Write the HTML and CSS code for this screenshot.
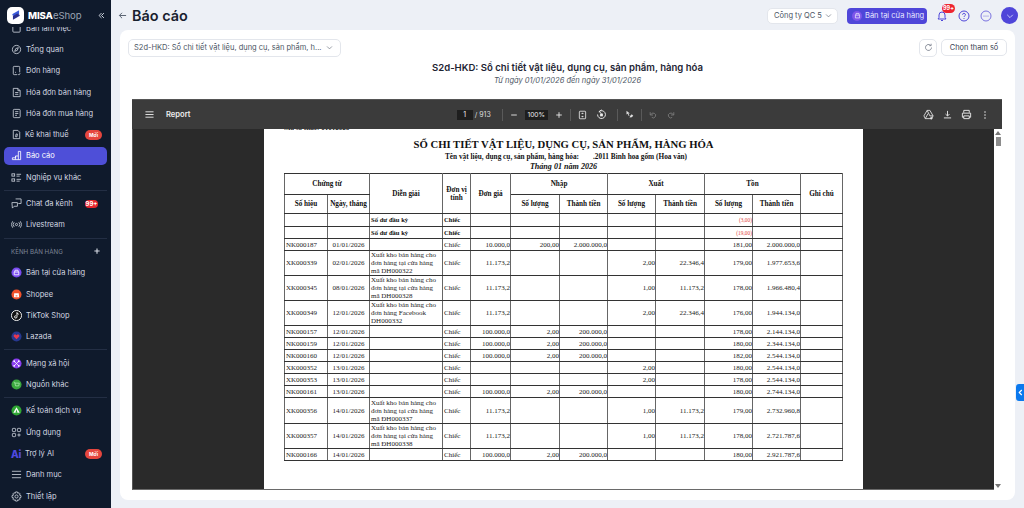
FILE: index.html
```html
<!DOCTYPE html>
<html lang="vi">
<head>
<meta charset="utf-8">
<title>Báo cáo</title>
<link rel="stylesheet" href="styles.css">
</head>
<body>
<aside class="sidebar">
  <div class="brand">
    <span class="logo"><svg viewBox="0 0 16 16" width="14" height="14"><path d="M11.5 2.5 4.5 6.5c-1 .7-1 1.6 0 2.2l2 1.1 5-3V5z" fill="#3b5bdb"/><path d="M4.5 13.5l7-4c1-.7 1-1.6 0-2.2l-2-1.1-5 3V11z" fill="#2a2f8f"/></svg></span>
    <span class="brand-name"><b>MISA</b><i>eShop</i></span>
    <svg class="collapse" viewBox="0 0 10 10" width="7" height="7"><path d="M5 1.5 1.5 5 5 8.5M8.5 1.5 5 5l3.500 3.500" fill="none" stroke="#cdd3dd" stroke-width="1.400"/></svg>
  </div>
  <nav class="nav">
    <div class="nav-inner">
      <a class="item"><svg class="ic" viewBox="0 0 12 12"><rect x="2" y="2" width="8" height="8" rx="1" class="ln"/></svg><span>Bàn làm việc</span></a>
      <a class="item"><svg class="ic" viewBox="0 0 12 12"><circle cx="6" cy="6" r="4.500" class="ln"/><path d="M4 8l1.200-3L8 4 6.800 7z" class="ln"/></svg><span>Tổng quan</span></a>
      <a class="item"><svg class="ic" viewBox="0 0 12 12"><path d="M9.500 8V2.500a1 1 0 0 0-1-1h-5a1 1 0 0 0-1 1v7a1 1 0 0 0 1 1h3" class="ln"/><path d="M7.500 10l1 1 1.500-2M4.500 8h1" class="ln"/></svg><span>Đơn hàng</span></a>
      <a class="item"><svg class="ic" viewBox="0 0 12 12"><path d="M2.500 1.500h5l2.500 2.500v6.500h-7.500z" class="ln"/><path d="M7.500 1.500V4H10M4.500 6h3.500M4.500 8h3.500" class="ln"/></svg><span>Hóa đơn bán hàng</span></a>
      <a class="item"><svg class="ic" viewBox="0 0 12 12"><rect x="2.500" y="1.500" width="7.500" height="9" rx="1" class="ln"/><path d="M4.500 4h3.500M4.500 6h3.500M4.500 8h2" class="ln"/></svg><span>Hóa đơn mua hàng</span></a>
      <a class="item tight"><svg class="ic" viewBox="0 0 12 12"><path d="M2.500 1.500h5l2 2v7h-7z" class="ln"/><path d="M5 8.500h1.500l.5-3H5.500z" class="ln"/></svg><span>Kê khai thuế</span><em class="tag">Mới</em></a>
      <a class="item active"><svg class="ic" viewBox="0 0 12 12"><path d="M1.500 10.500h9v-9h-2.500v5H5v2H1.500z" class="ln-w"/><path d="M5 6.500V10.500M8 6.500V10.500" class="ln-w"/></svg><span>Báo cáo</span></a>
      <a class="item"><svg class="ic" viewBox="0 0 12 12"><rect x="1" y="2" width="3" height="2.500" class="ln"/><rect x="1" y="7.500" width="3" height="2.500" class="ln"/><path d="M6 2.500h5M6 4.500h3.500M6 8h5M6 10h3.500" class="ln"/></svg><span>Nghiệp vụ khác</span></a>
      <div class="divider"></div>
      <a class="item"><svg class="ic" viewBox="0 0 12 12"><path d="M5 1h6v5H8" class="ln"/><path d="M1 5h6v4H3.500L1.500 11z" class="ln"/></svg><span>Chat đa kênh</span><em class="count">99+</em></a>
      <a class="item"><svg class="ic" viewBox="0 0 12 12"><circle cx="6" cy="6" r="1.200" class="ln"/><path d="M3.500 3.500a3.500 3.500 0 0 0 0 5M8.500 3.500a3.500 3.500 0 0 1 0 5M1.800 2.500a5.500 5.500 0 0 0 0 7M10.200 2.500a5.500 5.500 0 0 1 0 7" class="ln"/></svg><span>Livestream</span></a>
      <div class="divider"></div>
      <div class="section"><span>KÊNH BÁN HÀNG</span><svg viewBox="0 0 8 8" width="6" height="6"><path d="M4 .5v7M.5 4h7" stroke="#d5dae3" stroke-width="1.500"/></svg></div>
      <a class="item"><svg class="ic" viewBox="0 0 12 12"><circle cx="6" cy="6" r="5.500" fill="#7a4cf0"/><path d="M3.500 5.500h5v3h-5zM4 5.500 4.500 3.500h3L8 5.500" fill="none" stroke="#fff" stroke-width=".9"/></svg><span>Bán tại cửa hàng</span></a>
      <a class="item"><svg class="ic" viewBox="0 0 12 12"><circle cx="6" cy="6" r="5.500" fill="#f0512a"/><path d="M3.500 4.500h5l.3 4.500h-5.600z" fill="#fff"/><path d="M5 7.500h2" stroke="#f0512a"/></svg><span>Shopee</span></a>
      <a class="item"><svg class="ic" viewBox="0 0 12 12"><circle cx="6" cy="6" r="5.500" fill="#111" stroke="#fff"/><path d="M6.500 2.500v5a1.300 1.300 0 1 1-1.300-1.300M6.500 3c.3 1 1 1.500 2 1.600" fill="none" stroke="#fff" stroke-width="1"/></svg><span>TikTok Shop</span></a>
      <a class="item"><svg class="ic" viewBox="0 0 12 12"><circle cx="6" cy="6" r="5.500" fill="#27388f"/><path d="M6 9 3 6V4.300L4.500 3.500 6 4.500l1.500-1L9 4.300V6z" fill="#e8384f"/></svg><span>Lazada</span></a>
      <div class="divider"></div>
      <a class="item"><svg class="ic" viewBox="0 0 12 12"><circle cx="6" cy="6" r="5.500" fill="#8a3ff0"/><path d="M3.500 3.500l5 5M8.500 3.500l-5 5" stroke="#fff" stroke-width=".8"/><circle cx="3.500" cy="3.500" r="1" fill="#fff"/><circle cx="8.500" cy="3.500" r="1" fill="#fff"/><circle cx="3.500" cy="8.500" r="1" fill="#fff"/><circle cx="8.500" cy="8.500" r="1" fill="#fff"/></svg><span>Mạng xã hội</span></a>
      <a class="item"><svg class="ic" viewBox="0 0 12 12"><circle cx="6" cy="6" r="5.500" fill="#3ba83f"/><path d="M3 3.500h1l1 4h3.500L9 4.500H4.300" fill="none" stroke="#a8e8aa" stroke-width=".9"/></svg><span>Nguồn khác</span></a>
      <div class="divider"></div>
      <a class="item"><svg class="ic" viewBox="0 0 12 12"><circle cx="6" cy="6" r="5.500" fill="#2fa634"/><path d="M6 2.500 9.500 8.500h-7z" fill="#fff"/><path d="M6 5 4.800 8.500h2.400z" fill="#2fa634"/></svg><span>Kế toán dịch vụ</span></a>
      <a class="item"><svg class="ic" viewBox="0 0 12 12"><rect x="1.500" y="1.500" width="3.500" height="3.500" rx=".8" class="ln"/><rect x="7" y="1.500" width="3.500" height="3.500" rx=".8" class="ln"/><rect x="1.500" y="7" width="3.500" height="3.500" rx=".8" class="ln"/><path d="M8.700 7v3.500M7 8.700h3.500" class="ln"/></svg><span>Ứng dụng</span></a>
      <a class="item tight"><b class="ai">Ai</b><span>Trợ lý AI</span><em class="tag">Mới</em></a>
      <a class="item"><svg class="ic" viewBox="0 0 12 12"><path d="M1 2.500h10M1 6h10M1 9.500h10" class="ln"/></svg><span>Danh mục</span></a>
      <a class="item"><svg class="ic" viewBox="0 0 12 12"><circle cx="6" cy="6" r="1.700" class="ln"/><path d="M5 1h2l.4 1.500 1.400-.6 1.200 1.300-.8 1.300L10.900 5v2l-1.700.5.800 1.300-1.200 1.300-1.400-.6L7 11H5l-.4-1.500-1.400.6L2 8.800l.8-1.300L1.100 7V5l1.700-.5L2 3.200l1.200-1.300 1.400.6z" class="ln"/></svg><span>Thiết lập</span></a>
    </div>
  </nav>
</aside>

<main class="main">
  <header class="topbar">
    <svg class="back" viewBox="0 0 10 10" width="9" height="9"><path d="M9 5H1.500M4.500 2 1.500 5l3 3" fill="none" stroke="#5a6472" stroke-width="1.100"/></svg>
    <h1>Báo cáo</h1>
    <div class="spacer"></div>
    <button class="company">Công ty QC 5<svg viewBox="0 0 10 10" width="7" height="7"><path d="M1.500 3.500 5 7l3.500-3.500" fill="none" stroke="#6b7280" stroke-width="1"/></svg></button>
    <button class="sell"><span class="sell-ic"><svg viewBox="0 0 10 10" width="7" height="7"><path d="M2 4.500h6v4H2zM2.500 4.500 3 2h4l.5 2.500" fill="none" stroke="#fff" stroke-width=".9"/></svg></span>Bán tại cửa hàng</button>
    <span class="bell"><svg viewBox="0 0 12 12" width="12" height="12"><path d="M2 9h8L9 7.500V5a3 3 0 0 0-6 0v2.500zM5 10.500h2" fill="none" stroke="#4f46d9" stroke-width="1"/></svg><em class="bell-badge">99+</em></span>
    <svg class="round" viewBox="0 0 12 12" width="12" height="12"><circle cx="6" cy="6" r="5" fill="none" stroke="#4f46d9" stroke-width="1"/><path d="M4.600 4.700a1.400 1.400 0 1 1 2 1.300c-.4.300-.6.500-.6 1" fill="none" stroke="#4f46d9" stroke-width="1"/><circle cx="6" cy="8.500" r=".6" fill="#4f46d9"/></svg>
    <svg class="round" viewBox="0 0 12 12" width="12" height="12"><circle cx="6" cy="6" r="5" fill="none" stroke="#6d64dc" stroke-width=".9"/><circle cx="4" cy="6" r=".6" fill="#6d64dc"/><circle cx="6" cy="6" r=".6" fill="#6d64dc"/><circle cx="8" cy="6" r=".6" fill="#6d64dc"/></svg>
    <span class="avatar"><svg viewBox="0 0 10 10" width="8" height="8"><path d="M1.500 3.500 5 7l3.500-3.500" fill="none" stroke="#dfe3ff" stroke-width="1"/></svg></span>
  </header>

  <section class="card">
    <div class="filters">
      <div class="select"><span>S2d-HKD: Sổ chi tiết vật liệu, dụng cụ, sản phẩm, h...</span><svg viewBox="0 0 10 10" width="7" height="7"><path d="M1.500 3.500 5 7l3.500-3.500" fill="none" stroke="#6b7280" stroke-width="1"/></svg></div>
      <div class="spacer"></div>
      <button class="refresh"><svg viewBox="0 0 12 12" width="9" height="9"><path d="M10 6a4 4 0 1 1-1.300-3M9.500 1v2.500H7" fill="none" stroke="#6b7280" stroke-width="1"/></svg></button>
      <button class="params">Chọn tham số</button>
    </div>
    <h2 class="report-title">S2d-HKD: Sổ chi tiết vật liệu, dụng cụ, sản phẩm, hàng hóa</h2>
    <p class="report-date">Từ ngày 01/01/2026 đến ngày 31/01/2026</p>

    <div class="viewer">
      <div class="pdf-bar">
        <div class="bar-left">
          <svg viewBox="0 0 10 10" width="9" height="9"><path d="M.5 2h9M.5 5h9M.5 8h9" stroke="#eee" stroke-width="1"/></svg>
          <span class="doc-name">Report</span>
        </div>
        <div class="bar-center">
          <span class="field page-field">1</span>
          <span class="pages">/ 913</span>
          <i class="sep"></i>
          <svg viewBox="0 0 10 10" width="8" height="8"><path d="M1.500 5h7" stroke="#eee" stroke-width="1.100"/></svg>
          <span class="field zoom-field">100%</span>
          <svg viewBox="0 0 10 10" width="8" height="8"><path d="M1.500 5h7M5 1.500v7" stroke="#eee" stroke-width="1.100"/></svg>
          <i class="sep"></i>
          <svg class="after-2" viewBox="0 0 10 10" width="9" height="10"><rect x="1.500" y=".8" width="7" height="8.400" rx=".8" fill="none" stroke="#eee" stroke-width=".9"/><path d="M5 2.500v1.500M5 6v1.500M3.800 3.300h2.400M3.800 6.700h2.400" stroke="#eee" stroke-width=".7"/></svg>
          <svg class="after-3" viewBox="0 0 12 12" width="11" height="11"><path d="M3 3a4.300 4.300 0 1 1-1.300 3M6 .8 3.500 3 6 5" fill="none" stroke="#eee" stroke-width="1"/><rect x="4.500" y="5" width="3" height="3" fill="#eee"/></svg>
          <i class="sep"></i>
          <svg viewBox="0 0 12 12" width="9" height="9"><path d="M2 1v5l1.500-1L5 8l1-.5-1.500-3H6.500zM7 7.500l2-2 2 2-2 2zM6 10l1-2.500L9 9.500z" fill="#ddd"/></svg>
          <i class="sep"></i>
          <svg class="after-3" viewBox="0 0 10 10" width="8" height="8"><path d="M2.500 4.500a3 3 0 1 1 1 3.500M1.500 1.500v3.500h3.500" fill="none" stroke="#8a8a8a" stroke-width=".9"/></svg>
          <svg viewBox="0 0 10 10" width="8" height="8"><path d="M7.500 4.500a3 3 0 1 0-1 3.500M8.500 1.500v3.500H5" fill="none" stroke="#8a8a8a" stroke-width=".9"/></svg>
        </div>
        <div class="bar-right">
          <svg viewBox="0 0 12 12" width="11" height="11"><path d="M4.500 1.500h3L11 7.500 9.500 10.500h-7L1 7.500zM4.500 1.500 7.500 7.500h3.500M2.500 10.500l3-5.500" fill="none" stroke="#eee" stroke-width=".9"/><path d="M9 8.500v3M7.500 10h3" stroke="#eee"/></svg>
          <svg viewBox="0 0 10 10" width="9" height="9"><path d="M5 1v5.500M2.800 4.500 5 6.700l2.200-2.200M1 8.800h8" fill="none" stroke="#eee" stroke-width="1"/></svg>
          <svg class="after-2" viewBox="0 0 12 12" width="11" height="11"><path d="M3 4V1.500h6V4M3 9H1.500V4.500h9V9H9M3 7.500h6v3H3z" fill="none" stroke="#eee" stroke-width="1"/></svg>
          <svg viewBox="0 0 4 12" width="4" height="10"><circle cx="2" cy="2.500" r=".9" fill="#eee"/><circle cx="2" cy="6" r=".9" fill="#eee"/><circle cx="2" cy="9.500" r=".9" fill="#eee"/></svg>
        </div>
      </div>
      <div class="pdf-body">
        <div class="pdf-stage">
          <div class="page">
            <div class="clipped"><span>Mã số thuế: 01012026</span></div>
            <h3 class="pg-title">SỔ CHI TIẾT VẬT LIỆU, DỤNG CỤ, SẢN PHẨM, HÀNG HÓA</h3>
            <p class="pg-sub">Tên vật liệu, dụng cụ, sản phẩm, hàng hóa:<span class="gap"></span>.2011 Bình hoa gốm (Hoa văn)</p>
            <p class="pg-month">Tháng 01 năm 2026</p>
            <table class="ledger">
              <colgroup>
                <col class="c43"><col class="c42"><col class="c73"><col class="c28"><col class="c40"><col class="c49"><col class="c48"><col class="c48"><col class="c49"><col class="c48"><col class="c48"><col class="c42">
              </colgroup>
              <thead>
                <tr class="h1">
                  <th colspan="2">Chứng từ</th><th rowspan="2">Diễn giải</th><th rowspan="2">Đơn vị<br>tính</th><th rowspan="2">Đơn giá</th><th colspan="2">Nhập</th><th colspan="2">Xuất</th><th colspan="2">Tồn</th><th rowspan="2">Ghi chú</th>
                </tr>
                <tr class="h2">
                  <th>Số hiệu</th><th>Ngày, tháng</th><th>Số lượng</th><th>Thành tiền</th><th>Số lượng</th><th>Thành tiền</th><th>Số lượng</th><th>Thành tiền</th>
                </tr>
              </thead>
              <tbody>
                <tr class="r13"><td></td><td></td><td class="b">Số dư đầu kỳ</td><td class="b">Chiếc</td><td></td><td></td><td></td><td></td><td></td><td class="n red">(3,00)</td><td></td><td></td></tr>
                <tr class="r12"><td></td><td></td><td class="b">Số dư đầu kỳ</td><td class="b">Chiếc</td><td></td><td></td><td></td><td></td><td></td><td class="n red">(19,00)</td><td></td><td></td></tr>
                <tr class="r12"><td>NK000187</td><td class="c">01/01/2026</td><td></td><td>Chiếc</td><td class="n">10.000,0</td><td class="n">200,00</td><td class="n">2.000.000,0</td><td></td><td></td><td class="n">181,00</td><td class="n">2.000.000,0</td><td></td></tr>
                <tr class="r25"><td>XK000339</td><td class="c">02/01/2026</td><td>Xuất kho bán hàng cho đơn hàng tại cửa hàng mã DH000322</td><td>Chiếc</td><td class="n">11.173,2</td><td></td><td></td><td class="n">2,00</td><td class="n">22.346,4</td><td class="n">179,00</td><td class="n">1.977.653,6</td><td></td></tr>
                <tr class="r25"><td>XK000345</td><td class="c">08/01/2026</td><td>Xuất kho bán hàng cho đơn hàng tại cửa hàng mã DH000328</td><td>Chiếc</td><td class="n">11.173,2</td><td></td><td></td><td class="n">1,00</td><td class="n">11.173,2</td><td class="n">178,00</td><td class="n">1.966.480,4</td><td></td></tr>
                <tr class="r25"><td>XK000349</td><td class="c">12/01/2026</td><td>Xuất kho bán hàng cho đơn hàng Facebook DH000332</td><td>Chiếc</td><td class="n">11.173,2</td><td></td><td></td><td class="n">2,00</td><td class="n">22.346,4</td><td class="n">176,00</td><td class="n">1.944.134,0</td><td></td></tr>
                <tr class="r12"><td>NK000157</td><td class="c">12/01/2026</td><td></td><td>Chiếc</td><td class="n">100.000,0</td><td class="n">2,00</td><td class="n">200.000,0</td><td></td><td></td><td class="n">178,00</td><td class="n">2.144.134,0</td><td></td></tr>
                <tr class="r12"><td>NK000159</td><td class="c">12/01/2026</td><td></td><td>Chiếc</td><td class="n">100.000,0</td><td class="n">2,00</td><td class="n">200.000,0</td><td></td><td></td><td class="n">180,00</td><td class="n">2.344.134,0</td><td></td></tr>
                <tr class="r12"><td>NK000160</td><td class="c">12/01/2026</td><td></td><td>Chiếc</td><td class="n">100.000,0</td><td class="n">2,00</td><td class="n">200.000,0</td><td></td><td></td><td class="n">182,00</td><td class="n">2.544.134,0</td><td></td></tr>
                <tr class="r12"><td>XK000352</td><td class="c">13/01/2026</td><td></td><td>Chiếc</td><td></td><td></td><td></td><td class="n">2,00</td><td></td><td class="n">180,00</td><td class="n">2.544.134,0</td><td></td></tr>
                <tr class="r12"><td>XK000353</td><td class="c">13/01/2026</td><td></td><td>Chiếc</td><td></td><td></td><td></td><td class="n">2,00</td><td></td><td class="n">178,00</td><td class="n">2.544.134,0</td><td></td></tr>
                <tr class="r12"><td>NK000161</td><td class="c">13/01/2026</td><td></td><td>Chiếc</td><td class="n">100.000,0</td><td class="n">2,00</td><td class="n">200.000,0</td><td></td><td></td><td class="n">180,00</td><td class="n">2.744.134,0</td><td></td></tr>
                <tr class="r26"><td>XK000356</td><td class="c">14/01/2026</td><td>Xuất kho bán hàng cho đơn hàng tại cửa hàng mã ĐH000337</td><td>Chiếc</td><td class="n">11.173,2</td><td></td><td></td><td class="n">1,00</td><td class="n">11.173,2</td><td class="n">179,00</td><td class="n">2.732.960,8</td><td></td></tr>
                <tr class="r25"><td>XK000357</td><td class="c">14/01/2026</td><td>Xuất kho bán hàng cho đơn hàng tại cửa hàng mã ĐH000338</td><td>Chiếc</td><td class="n">11.173,2</td><td></td><td></td><td class="n">1,00</td><td class="n">11.173,2</td><td class="n">178,00</td><td class="n">2.721.787,6</td><td></td></tr>
                <tr class="r12"><td>NK000166</td><td class="c">14/01/2026</td><td></td><td>Chiếc</td><td class="n">100.000,0</td><td class="n">2,00</td><td class="n">200.000,0</td><td></td><td></td><td class="n">180,00</td><td class="n">2.921.787,6</td><td></td></tr>
              </tbody>
            </table>
          </div>
        </div>
        <div class="scrollbar">
          <i class="arrow-up"></i>
          <i class="thumb"></i>
          <div class="spacer"></div>
          <i class="arrow-down"></i>
        </div>
      </div>
    </div>
  </section>
  <button class="side-tab"><svg viewBox="0 0 6 8" width="5" height="7"><path d="M4.500 1 1.500 4l3 3" fill="none" stroke="#fff" stroke-width="1.400"/></svg></button>
</main>
</body>
</html>
```

FILE: styles.css
```css
* { box-sizing: border-box; }
html, body { margin: 0; height: 508px; overflow: hidden; }
body { display: flex; font-family: Inter, "Noto Sans", sans-serif; background: #edf0f6; color: #1d2433; }
button { font-family: inherit; cursor: pointer; }
.spacer { flex: 1; }

/* sidebar */
.sidebar { width: 111px; height: 508px; background: #0f1a2c; display: flex; flex-direction: column; flex: none; overflow: hidden; }
.brand { height: 27px; flex: none; display: flex; align-items: center; padding: 3px 6px 0 7px; }
.logo { width: 17px; height: 17px; border-radius: 5px; background: #fff; display: flex; align-items: center; justify-content: center; }
.brand-name { margin-left: 4px; font-size: 9.6px; letter-spacing: -.1px; flex: 1; }
.brand-name b { color: #fff; font-weight: 800; }
.brand-name i { color: #9aa3b2; font-style: normal; }
.nav { flex: 1; overflow: hidden; }
.nav-inner { margin-top: -9.5px; }
.item { height: 21.3px; margin: 0 4px; padding-left: 7px; display: flex; align-items: center; gap: 4px; font-size: 7.5px; color: #d3d8e1; border-radius: 5px; }
.item.tight span { margin-left: -1px; }
.item.active { height: 17.5px; margin-top: 1.9px; margin-bottom: 1.9px; background: #4e4fd8; color: #fff; }
.ic { width: 11px; height: 11px; flex: none; }
.ln { fill: none; stroke: #cdd3dd; stroke-width: .9; }
.ln-w { fill: none; stroke: #fff; stroke-width: .9; }
.tag { margin-left: auto; margin-right: 5px; width: 17px; height: 10px; border-radius: 5px; background: #e5463e; color: #fff; font-size: 5px; font-style: normal; font-weight: 700; display: flex; align-items: center; justify-content: center; }
.count { margin-left: auto; margin-right: 9px; width: 13px; height: 8px; border-radius: 4px; background: #e5262e; color: #fff; font-size: 6px; font-style: normal; font-weight: 700; display: flex; align-items: center; justify-content: center; }
.divider { height: 5.2px; margin: 0 4px; display: flex; align-items: center; }
.divider::before { content: ""; flex: 1; height: 1px; background: #232e44; }
.section { height: 21.3px; display: flex; align-items: center; justify-content: space-between; padding: 0 11px; font-size: 6.2px; color: #7c8596; }
.ai { width: 11px; flex: none; font-size: 10px; font-weight: 800; color: #4f4ae0; letter-spacing: -.3px; line-height: 1; }

/* main */
.main { flex: 1; height: 508px; display: flex; flex-direction: column; position: relative; min-width: 0; }
.topbar { height: 30px; flex: none; display: flex; align-items: center; padding: 1px 6px 0 7px; }
.back { margin-right: 5px; }
h1 { margin: 0; font-size: 14.4px; font-weight: 600; color: #18202e; }
.company { width: 71px; height: 16px; border: 1px solid #e3e6ec; border-radius: 5px; background: #fff; font-size: 7.5px; color: #4b5563; padding: 0 5px 0 6px; display: flex; align-items: center; justify-content: space-between; margin-right: 9px; white-space: nowrap; }
.sell { width: 80px; height: 16px; border: 0; border-radius: 4px; background: #4f46d9; color: #e8e9ff; font-size: 7.5px; padding: 0 0 0 5px; display: flex; align-items: center; gap: 3px; white-space: nowrap; margin-right: 9px; }
.sell-ic { width: 10px; height: 10px; border-radius: 50%; background: #7d55ea; display: flex; align-items: center; justify-content: center; flex: none; }
.bell { width: 12px; height: 12px; position: relative; margin-right: 10px; }
.bell svg { display: block; }
.bell-badge { position: absolute; left: 6px; top: -6px; width: 13px; height: 9px; border-radius: 4.5px; background: #ee2530; color: #fff; font-size: 5.5px; font-style: normal; font-weight: 700; display: flex; align-items: center; justify-content: center; }
.round { margin-right: 9.5px; flex: none; }
.avatar { width: 17px; height: 17px; border-radius: 50%; background: #4f46d9; display: flex; align-items: center; justify-content: center; }

.card { width: 895px; height: 470px; margin-left: 9px; background: #fff; border-radius: 8px; padding: 9px 8px 0; display: flex; flex-direction: column; }
.filters { height: 17px; display: flex; align-items: center; flex: none; }
.select { width: 213px; height: 18px; border: 1px solid #e3e6ec; border-radius: 5px; padding: 0 7px 0 5px; font-size: 7.5px; color: #4b5563; display: flex; align-items: center; justify-content: space-between; white-space: nowrap; }
.refresh { width: 18px; height: 18px; border: 1px solid #e3e6ec; border-radius: 5px; background: #fff; padding: 0; display: flex; align-items: center; justify-content: center; margin-right: 4px; }
.params { width: 66px; height: 17px; border: 1px solid #e3e6ec; border-radius: 5px; background: #fff; font-size: 7.4px; color: #374151; padding: 0; }
.report-title { margin: 5px 0 0; text-align: center; font-size: 9.55px; line-height: 14px; font-weight: 600; color: #1d2433; }
.report-date { margin: 0; text-align: center; font-size: 7.5px; line-height: 12px; font-style: italic; color: #4b5563; }

/* pdf viewer */
.viewer { margin: 12px 5px 0 4px; width: 870px; height: 391px; display: flex; flex-direction: column; background: #fff; }
.pdf-bar { height: 30px; flex: none; background: #3b3b3b; border-top: 1px solid #555; display: grid; grid-template-columns: 1fr auto 1fr; align-items: center; color: #eee; }
.bar-left { display: flex; align-items: center; padding-left: 13px; gap: 12px; }
.doc-name { font-size: 7.6px; font-weight: 600; color: #eee; }
.bar-center { display: flex; align-items: center; gap: 7px; padding-right: 2px; }
.bar-center svg { display: block; flex: none; }
.after-2 { margin-right: 2.5px; }
.after-3 { margin-right: 3px; }
.field { height: 10px; background: #1e1e1e; font-size: 7px; color: #eee; display: flex; align-items: center; justify-content: center; }
.page-field { width: 16px; margin-right: -5px; }
.zoom-field { width: 23px; font-size: 6.6px; }
.pages { font-size: 7px; color: #ddd; width: 17px; margin-right: 3px; }
.sep { width: 1px; height: 12px; background: #5a5a5a; }
.bar-right { display: flex; align-items: center; justify-content: flex-end; gap: 9px; padding-right: 15px; }
.pdf-body { flex: 1; display: flex; min-height: 0; }
.pdf-stage { width: 862px; background: #2a2a2a; border-bottom: 1px solid #6a6a6a; border-left: 1px solid #555; display: flex; justify-content: center; overflow: hidden; }
.page { width: 599px; flex: none; height: 361px; background: #fff; font-family: "Liberation Serif", "Times New Roman", serif; color: #222; padding-left: 20px; }
.clipped { height: 3px; overflow: hidden; display: flex; align-items: flex-end; font-size: 7px; font-weight: 700; line-height: 8px; white-space: nowrap; }
.pg-title { margin: 4px 0 0 -20px; text-align: center; font-size: 10.7px; line-height: 16px; font-weight: 700; color: #111; width: 599px; }
.pg-sub { margin: 0 0 0 -20px; width: 599px; text-align: center; font-size: 7.3px; line-height: 10px; font-weight: 700; color: #111; padding-left: 5px; }
.gap { display: inline-block; width: 14px; }
.pg-month { margin: 0 0 0 -20px; width: 599px; text-align: center; font-size: 8.1px; line-height: 10px; font-weight: 700; font-style: italic; color: #111; }
.ledger { table-layout: fixed; border-collapse: collapse; width: 558px; margin-top: 1px; font-size: 7px; line-height: 8px; }
.c43 { width: 43px; } .c42 { width: 42px; } .c73 { width: 73px; } .c28 { width: 28px; } .c40 { width: 40px; } .c49 { width: 49px; } .c48 { width: 48px; }
.ledger th, .ledger td { border: 1px solid #333; border-left-color: #666; border-right-color: #666; padding: 0 1px; overflow: hidden; }
.ledger th { font-weight: 700; text-align: center; font-size: 7.2px; color: #111; }
.ledger td { color: #222; }
.ledger td.c { text-align: center; }
.ledger td.n { text-align: right; padding-right: 0; }
.ledger td.b { font-weight: 700; color: #111; font-size: 6.6px; }
.ledger td.red { color: #e2453c; font-size: 5.4px; }
.h1 { height: 21px; } .h2 { height: 19px; }
.r12 { height: 12px; } .r13 { height: 13px; } .r25 { height: 25px; } .r26 { height: 26px; }

.scrollbar { flex: 1; background: #fff; display: flex; flex-direction: column; align-items: center; padding: 2px 0; }
.thumb { width: 5px; height: 9px; background: #8c8c8c; margin-top: 2px; }
.arrow-up { border: 3px solid transparent; border-top: 0; border-bottom: 4px solid #777; }
.arrow-down { border: 3px solid transparent; border-bottom: 0; border-top: 4px solid #777; }

.side-tab { position: absolute; right: 0; top: 384px; width: 8px; height: 17px; border: 0; border-radius: 3px 0 0 3px; background: #0b79ee; padding: 0; display: flex; align-items: center; justify-content: center; }
```
